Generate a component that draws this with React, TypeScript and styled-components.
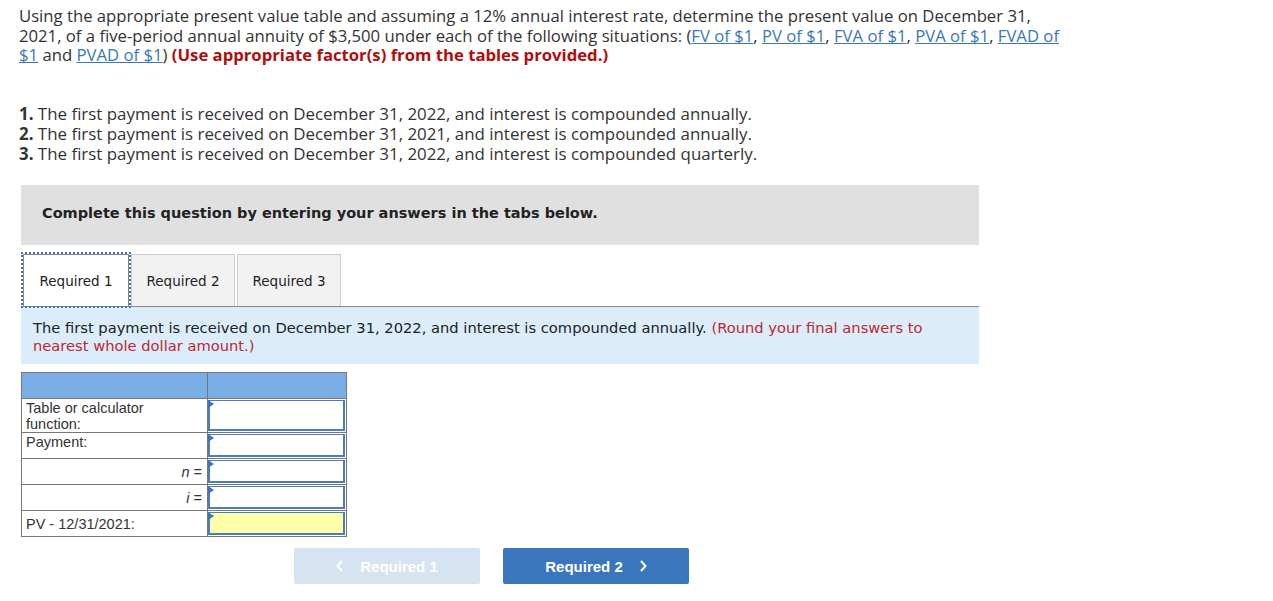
import React from 'react';
import styled, { createGlobalStyle } from 'styled-components';

const Global = createGlobalStyle`
  html, body {
    margin: 0;
    padding: 0;
    background: #fff;
  }
  body {
    font-family: "Open Sans", Lato, sans-serif;
    color: #333;
  }
`;

const Page = styled.div`
  padding: 6px 0 0 19px;
  width: 1120px;
`;

const Intro = styled.p`
  margin: 0;
  font-size: 16.7px;
  line-height: 19.7px;
  color: #333;
`;

const Link = styled.a`
  color: #3a76bb;
  text-decoration: underline;
`;

const Warn = styled.strong`
  color: #b00d0d;
  font-weight: 700;
`;

const List = styled.ol`
  list-style: none;
  margin: 39px 0 0;
  padding: 0;
  font-size: 16.9px;
  line-height: 19.7px;

  b {
    font-weight: 700;
  }
`;

const Panel = styled.div`
  margin: 22px 0 0 21px;
  width: 958px;
`;

const Banner = styled.div`
  background: #e0e0e0;
  height: 60px;
  box-sizing: border-box;
  padding: 0 0 5px 21px;
  display: flex;
  align-items: center;
  font-family: "DejaVu Sans", Verdana, sans-serif;
  font-weight: 700;
  font-size: 14.5px;
  color: #222;
`;

const Tabs = styled.div`
  display: flex;
  gap: 2px;
  margin-top: 9px;
  padding-left: 2px;
  border-bottom: 1px solid #888;
`;

const Tab = styled.div<{ active?: boolean }>`
  height: 52px;
  width: ${(p) => (p.active ? '106px' : '104px')};
  box-sizing: border-box;
  display: flex;
  align-items: center;
  justify-content: center;
  font-family: Tahoma, "DejaVu Sans", sans-serif;
  font-size: 13.5px;
  color: #222;
  background: ${(p) => (p.active ? '#fff' : '#f2f2f2')};
  border: 1px solid ${(p) => (p.active ? '#888' : '#ccc')};
  border-bottom: none;
  outline: ${(p) => (p.active ? '2px dotted #3a76bb' : 'none')};
  margin-bottom: ${(p) => (p.active ? '-1px' : '0')};
`;

const Info = styled.div`
  background: #dbecfa;
  padding: 12px 12px 9px;
  font-family: Tahoma, "DejaVu Sans", sans-serif;
  font-size: 14.7px;
  line-height: 18px;
  color: #222;
`;

const Red = styled.span`
  color: #c0282d;
`;

const Grid = styled.div`
  margin-top: 8px;
  display: grid;
  grid-template-columns: 186px 138px;
  width: 324px;
  border: 1px solid #777;
  border-bottom: none;
  font-family: "Liberation Sans", Arial, sans-serif;
  font-size: 14.5px;
  color: #333;
`;

const Head = styled.div<{ last?: boolean }>`
  height: 25px;
  background: #7aaee6;
  border-bottom: 1px solid #777;
  border-right: ${(p) => (p.last ? 'none' : '1px solid #777')};
`;

const Label = styled.div<{ right?: boolean; h: number }>`
  height: ${(p) => p.h}px;
  box-sizing: border-box;
  border-bottom: 1px solid #777;
  border-right: 1px solid #777;
  padding: ${(p) => (p.right ? '5px' : '1px')} 5px 0 4px;
  line-height: 16px;
  text-align: ${(p) => (p.right ? 'right' : 'left')};

  i {
    font-style: italic;
  }
`;

const Cell = styled.div<{ h: number; yellow?: boolean }>`
  position: relative;
  height: ${(p) => p.h}px;
  box-sizing: border-box;
  border-bottom: 1px solid #777;
  padding: 1px 1px 1px 0;
  background: #fff;

  &::before {
    content: '';
    display: block;
    height: 100%;
    box-sizing: border-box;
    border: 2px solid #4a7dc0;
    border-top-width: 1px;
    background: ${(p) => (p.yellow ? '#ffffaa' : '#fff')};
  }

  &::after {
    content: '';
    position: absolute;
    top: 1px;
    left: 0;
    border-top: 4px solid transparent;
    border-bottom: 4px solid transparent;
    border-left: 6px solid #3a76bb;
  }
`;

const Nav = styled.div`
  display: flex;
  gap: 23px;
  margin-top: 11px;
  margin-left: 273px;
`;

const NavButton = styled.button<{ disabled?: boolean }>`
  width: 186px;
  height: 36px;
  border: none;
  border-radius: 2px;
  background: ${(p) => (p.disabled ? '#d6e3f1' : '#3a76bb')};
  color: #fff;
  font-family: "Liberation Sans", Arial, sans-serif;
  font-weight: 700;
  font-size: 15px;
  display: flex;
  align-items: center;
  justify-content: center;
  gap: 16px;
  cursor: pointer;
`;

const Chevron = ({ dir }: { dir: 'left' | 'right' }) => (
  <svg width="8" height="12" viewBox="0 0 8 12">
    <path
      d={dir === 'left' ? 'M6 1 L1.5 6 L6 11' : 'M2 1 L6.5 6 L2 11'}
      fill="none"
      stroke="#fff"
      strokeWidth="2"
    />
  </svg>
);

export default function App() {
  return (
    <>
      <Global />
      <Page>
        <Intro>
          Using the appropriate present value table and assuming a 12% annual interest rate, determine the present value on December 31,
          <br />
          2021, of a five-period annual annuity of $3,500 under each of the following situations: (
          <Link>FV of $1</Link>, <Link>PV of $1</Link>, <Link>FVA of $1</Link>, <Link>PVA of $1</Link>, <Link>FVAD of</Link>
          <br />
          <Link>$1</Link> and <Link>PVAD of $1</Link>) <Warn>(Use appropriate factor(s) from the tables provided.)</Warn>
        </Intro>
        <List>
          <li>
            <b>1.</b> The first payment is received on December 31, 2022, and interest is compounded annually.
          </li>
          <li>
            <b>2.</b> The first payment is received on December 31, 2021, and interest is compounded annually.
          </li>
          <li>
            <b>3.</b> The first payment is received on December 31, 2022, and interest is compounded quarterly.
          </li>
        </List>
      </Page>
      <Panel>
        <Banner>Complete this question by entering your answers in the tabs below.</Banner>
        <Tabs>
          <Tab active>Required 1</Tab>
          <Tab>Required 2</Tab>
          <Tab>Required 3</Tab>
        </Tabs>
        <Info>
          The first payment is received on December 31, 2022, and interest is compounded annually.{' '}
          <Red>(Round your final answers to nearest whole dollar amount.)</Red>
        </Info>
        <Grid>
          <Head />
          <Head last />
          <Label h={34}>
            Table or calculator
            <br />
            function:
          </Label>
          <Cell h={34} />
          <Label h={26}>Payment:</Label>
          <Cell h={26} />
          <Label h={26} right>
            <i>n</i> =
          </Label>
          <Cell h={26} />
          <Label h={26} right>
            <i>i</i> =
          </Label>
          <Cell h={26} />
          <Label h={26} style={{ paddingTop: 5 }}>
            PV - 12/31/2021:
          </Label>
          <Cell h={26} yellow />
        </Grid>
        <Nav>
          <NavButton disabled>
            <Chevron dir="left" />
            Required 1
          </NavButton>
          <NavButton>
            Required 2
            <Chevron dir="right" />
          </NavButton>
        </Nav>
      </Panel>
    </>
  );
}
